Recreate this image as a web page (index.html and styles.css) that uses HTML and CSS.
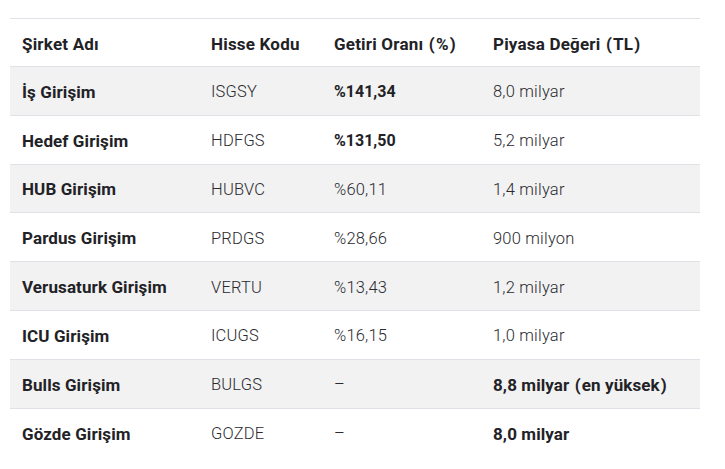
FILE: index.html
```html
<!DOCTYPE html>
<html lang="tr">
<head>
<meta charset="utf-8">
<link rel="stylesheet" href="styles.css">
</head>
<body>
<table class="tbl">
  <colgroup>
    <col class="c1"><col class="c2"><col class="c3"><col class="c4">
  </colgroup>
  <thead>
    <tr><th>Şirket Adı</th><th>Hisse Kodu</th><th>Getiri Oranı <span class="p">(</span>%<span class="p">)</span></th><th>Piyasa Değeri <span class="p">(</span>TL<span class="p">)</span></th></tr>
  </thead>
  <tbody>
    <tr><td class="name">İş Girişim</td><td>ISGSY</td><td class="b">%141,34</td><td>8,0 milyar</td></tr>
    <tr><td class="name">Hedef Girişim</td><td>HDFGS</td><td class="b">%131,50</td><td>5,2 milyar</td></tr>
    <tr><td class="name">HUB Girişim</td><td>HUBVC</td><td>%60,11</td><td>1,4 milyar</td></tr>
    <tr><td class="name">Pardus Girişim</td><td>PRDGS</td><td>%28,66</td><td>900 milyon</td></tr>
    <tr><td class="name">Verusaturk Girişim</td><td>VERTU</td><td>%13,43</td><td>1,2 milyar</td></tr>
    <tr><td class="name">ICU Girişim</td><td>ICUGS</td><td>%16,15</td><td>1,0 milyar</td></tr>
    <tr><td class="name">Bulls Girişim</td><td>BULGS</td><td>–</td><td class="b big">8,8 milyar <span class="p">(</span>en yüksek<span class="p">)</span></td></tr>
    <tr><td class="name">Gözde Girişim</td><td>GOZDE</td><td>–</td><td class="b big">8,0 milyar</td></tr>
  </tbody>
</table>
</body>
</html>
```

FILE: styles.css
```css
html, body {
  margin: 0;
  padding: 0;
  background: #ffffff;
}
body {
  padding: 18px 25px 0 10px;
  font-family: Roboto, "Liberation Sans", sans-serif;
  color: #222226;
}
.tbl {
  width: 690px;
  border-collapse: collapse;
  table-layout: fixed;
  font-size: 16px;
}
.c1 { width: 189px; }
.c2 { width: 123px; }
.c3 { width: 159px; }
.c4 { width: 219px; }
.tbl th, .tbl td {
  padding: 2px 12px 0;
  text-align: left;
  vertical-align: middle;
  border-top: 1px solid #e0e0e6;
  box-sizing: border-box;
  white-space: nowrap;
}
.tbl th {
  font-weight: 700;
  font-size: 17px;
  letter-spacing: 0.2px;
  color: #222226;
  height: 48px;
}
.p {
  padding: 0 1px;
}
.tbl td {
  height: 48.8px;
  font-weight: 300;
  font-size: 16.5px;
  letter-spacing: 0.2px;
  color: #2a2a30;
}
.tbl td.name {
  font-weight: 700;
  font-size: 17px;
  letter-spacing: 0.1px;
  color: #222226;
}
.tbl td.b {
  font-weight: 700;
  font-size: 16px;
  letter-spacing: 0;
  color: #222226;
}
.tbl td.big {
  font-size: 17px;
  letter-spacing: 0.1px;
}
.tbl tbody tr:nth-child(odd) {
  background: #f2f2f2;
}
```
